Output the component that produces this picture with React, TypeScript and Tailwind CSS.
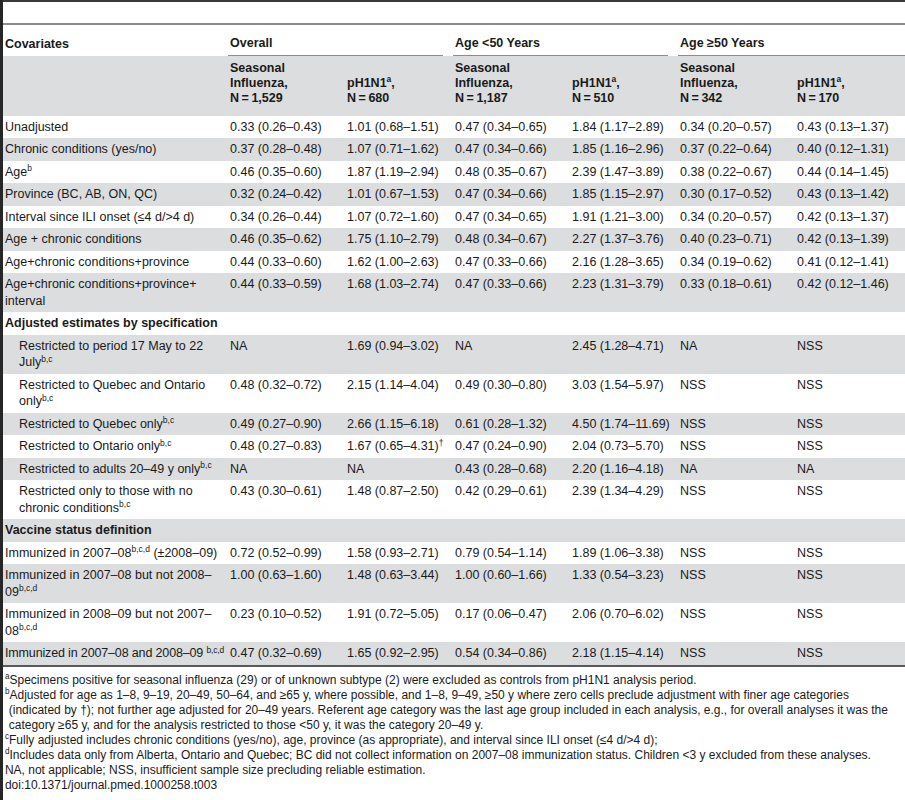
import type { ReactNode } from "react";

type Row = {
  label: ReactNode;
  values?: ReactNode[];
  indent?: boolean;
  section?: boolean;
};

const Sup = ({ children }: { children: ReactNode }) => (
  <sup className="text-[8.5px]">{children}</sup>
);

const rows: Row[] = [
  {
    label: "Unadjusted",
    values: ["0.33 (0.26–0.43)", "1.01 (0.68–1.51)", "0.47 (0.34–0.65)", "1.84 (1.17–2.89)", "0.34 (0.20–0.57)", "0.43 (0.13–1.37)"],
  },
  {
    label: "Chronic conditions (yes/no)",
    values: ["0.37 (0.28–0.48)", "1.07 (0.71–1.62)", "0.47 (0.34–0.66)", "1.85 (1.16–2.96)", "0.37 (0.22–0.64)", "0.40 (0.12–1.31)"],
  },
  {
    label: (
      <>
        Age<Sup>b</Sup>
      </>
    ),
    values: ["0.46 (0.35–0.60)", "1.87 (1.19–2.94)", "0.48 (0.35–0.67)", "2.39 (1.47–3.89)", "0.38 (0.22–0.67)", "0.44 (0.14–1.45)"],
  },
  {
    label: "Province (BC, AB, ON, QC)",
    values: ["0.32 (0.24–0.42)", "1.01 (0.67–1.53)", "0.47 (0.34–0.66)", "1.85 (1.15–2.97)", "0.30 (0.17–0.52)", "0.43 (0.13–1.42)"],
  },
  {
    label: "Interval since ILI onset (≤4 d/>4 d)",
    values: ["0.34 (0.26–0.44)", "1.07 (0.72–1.60)", "0.47 (0.34–0.65)", "1.91 (1.21–3.00)", "0.34 (0.20–0.57)", "0.42 (0.13–1.37)"],
  },
  {
    label: "Age + chronic conditions",
    values: ["0.46 (0.35–0.62)", "1.75 (1.10–2.79)", "0.48 (0.34–0.67)", "2.27 (1.37–3.76)", "0.40 (0.23–0.71)", "0.42 (0.13–1.39)"],
  },
  {
    label: "Age+chronic conditions+province",
    values: ["0.44 (0.33–0.60)", "1.62 (1.00–2.63)", "0.47 (0.33–0.66)", "2.16 (1.28–3.65)", "0.34 (0.19–0.62)", "0.41 (0.12–1.41)"],
  },
  {
    label: (
      <>
        Age+chronic conditions+province+
        <br />
        interval
      </>
    ),
    values: ["0.44 (0.33–0.59)", "1.68 (1.03–2.74)", "0.47 (0.33–0.66)", "2.23 (1.31–3.79)", "0.33 (0.18–0.61)", "0.42 (0.12–1.46)"],
  },
  { label: "Adjusted estimates by specification", section: true },
  {
    indent: true,
    label: (
      <>
        Restricted to period 17 May to 22
        <br />
        July<Sup>b,c</Sup>
      </>
    ),
    values: ["NA", "1.69 (0.94–3.02)", "NA", "2.45 (1.28–4.71)", "NA", "NSS"],
  },
  {
    indent: true,
    label: (
      <>
        Restricted to Quebec and Ontario
        <br />
        only<Sup>b,c</Sup>
      </>
    ),
    values: ["0.48 (0.32–0.72)", "2.15 (1.14–4.04)", "0.49 (0.30–0.80)", "3.03 (1.54–5.97)", "NSS", "NSS"],
  },
  {
    indent: true,
    label: (
      <>
        Restricted to Quebec only<Sup>b,c</Sup>
      </>
    ),
    values: ["0.49 (0.27–0.90)", "2.66 (1.15–6.18)", "0.61 (0.28–1.32)", "4.50 (1.74–11.69)", "NSS", "NSS"],
  },
  {
    indent: true,
    label: (
      <>
        Restricted to Ontario only<Sup>b,c</Sup>
      </>
    ),
    values: [
      "0.48 (0.27–0.83)",
      <>
        1.67 (0.65–4.31)<Sup>†</Sup>
      </>,
      "0.47 (0.24–0.90)",
      "2.04 (0.73–5.70)",
      "NSS",
      "NSS",
    ],
  },
  {
    indent: true,
    label: (
      <>
        Restricted to adults 20–49 y only<Sup>b,c</Sup>
      </>
    ),
    values: ["NA", "NA", "0.43 (0.28–0.68)", "2.20 (1.16–4.18)", "NA", "NA"],
  },
  {
    indent: true,
    label: (
      <>
        Restricted only to those with no
        <br />
        chronic conditions<Sup>b,c</Sup>
      </>
    ),
    values: ["0.43 (0.30–0.61)", "1.48 (0.87–2.50)", "0.42 (0.29–0.61)", "2.39 (1.34–4.29)", "NSS", "NSS"],
  },
  { label: "Vaccine status definition", section: true },
  {
    label: (
      <>
        Immunized in 2007–08<Sup>b,c,d</Sup> (±2008–09)
      </>
    ),
    values: ["0.72 (0.52–0.99)", "1.58 (0.93–2.71)", "0.79 (0.54–1.14)", "1.89 (1.06–3.38)", "NSS", "NSS"],
  },
  {
    label: (
      <>
        Immunized in 2007–08 but not 2008–
        <br />
        09<Sup>b,c,d</Sup>
      </>
    ),
    values: ["1.00 (0.63–1.60)", "1.48 (0.63–3.44)", "1.00 (0.60–1.66)", "1.33 (0.54–3.23)", "NSS", "NSS"],
  },
  {
    label: (
      <>
        Immunized in 2008–09 but not 2007–
        <br />
        08<Sup>b,c,d</Sup>
      </>
    ),
    values: ["0.23 (0.10–0.52)", "1.91 (0.72–5.05)", "0.17 (0.06–0.47)", "2.06 (0.70–6.02)", "NSS", "NSS"],
  },
  {
    label: (
      <span className="tracking-[-0.15px]">
        Immunized in 2007–08 and 2008–09 <Sup>b,c,d</Sup>
      </span>
    ),
    values: ["0.47 (0.32–0.69)", "1.65 (0.92–2.95)", "0.54 (0.34–0.86)", "2.18 (1.15–4.14)", "NSS", "NSS"],
  },
];

const subHeads = [
  { n: "1,529", seasonal: true },
  { n: "680" },
  { n: "1,187", seasonal: true },
  { n: "510" },
  { n: "342", seasonal: true },
  { n: "170" },
];

function GroupHead({ title, last }: { title: ReactNode; last?: boolean }) {
  return (
    <th colSpan={2} className="p-0 text-left align-bottom font-bold">
      <div
        className={`border-b border-[#8c8c8c] pb-[3px] pl-[2px] pt-[10px] ${last ? "" : "mr-[10px]"}`}
      >
        {title}
      </div>
    </th>
  );
}

export default function App() {
  return (
    <div className="min-h-[800px] overflow-hidden border-l-[3px] border-[#262626] bg-white font-['Liberation_Sans',Arial,sans-serif] text-[#1a1a1a]">
      <div className="h-[23px] border-t-2 border-[#3a3a3a]" />

      <div className="border-b-2 border-t-2 border-b-[#5a5a5a] border-t-[#8c8c8c] text-[12.5px] leading-[16.5px]">
        <table className="w-full table-fixed border-collapse">
          <colgroup>
            <col className="w-[225px]" />
            <col className="w-[117px]" />
            <col className="w-[108px]" />
            <col className="w-[117px]" />
            <col className="w-[108px]" />
            <col className="w-[117px]" />
            <col className="w-[110px]" />
          </colgroup>
          <thead>
            <tr>
              <th className="pb-[3px] pl-[2px] pt-[10px] text-left align-bottom font-bold">
                Covariates
              </th>
              <GroupHead title="Overall" />
              <GroupHead title="Age <50 Years" />
              <GroupHead title="Age ≥50 Years" last />
            </tr>
            <tr className="bg-[#dcdddf] leading-[15px]">
              <th />
              {subHeads.map((h, i) => (
                <th
                  key={i}
                  className="pb-[10px] pl-[2px] pt-[5px] text-left align-bottom font-bold"
                >
                  {h.seasonal ? (
                    <>
                      Seasonal
                      <br />
                      Influenza,
                    </>
                  ) : (
                    <>
                      pH1N1<Sup>a</Sup>,
                    </>
                  )}
                  <br />N{"\u2009"}={"\u2009"}
                  {h.n}
                </th>
              ))}
            </tr>
          </thead>
          <tbody>
            {rows.map((row, i) => (
              <tr key={i} className={i % 2 === 1 ? "bg-[#dcdddf]" : "bg-white"}>
                {row.section ? (
                  <td colSpan={7} className="py-[3px] pl-[2px] font-bold whitespace-nowrap">
                    {row.label}
                  </td>
                ) : (
                  <>
                    <td
                      className={`py-[3px] align-top whitespace-nowrap ${row.indent ? "pl-[16px]" : "pl-[2px]"}`}
                    >
                      {row.label}
                    </td>
                    {row.values?.map((v, j) => (
                      <td key={j} className="py-[3px] pl-[2px] align-top whitespace-nowrap">
                        {v}
                      </td>
                    ))}
                  </>
                )}
              </tr>
            ))}
          </tbody>
        </table>
      </div>

      {/* footnotes are set a touch narrower than the table text */}
      <div className="w-[940px] origin-top-left scale-x-[0.96] pl-[2px] pt-[6px] text-[12.5px] leading-[15px] whitespace-nowrap">
        <p>
          <Sup>a</Sup>Specimens positive for seasonal influenza (29) or of unknown subtype (2) were
          excluded as controls from pH1N1 analysis period.
        </p>
        <p>
          <Sup>b</Sup>Adjusted for age as 1–8, 9–19, 20–49, 50–64, and ≥65 y, where possible, and
          1–8, 9–49, ≥50 y where zero cells preclude adjustment with finer age categories
        </p>
        <p className="pl-[4px]">
          (indicated by †); not further age adjusted for 20–49 years. Referent age category was the
          last age group included in each analysis, e.g., for overall analyses it was the
        </p>
        <p className="pl-[4px]">
          category ≥65 y, and for the analysis restricted to those &lt;50 y, it was the category
          20–49 y.
        </p>
        <p>
          <Sup>c</Sup>Fully adjusted includes chronic conditions (yes/no), age, province (as
          appropriate), and interval since ILI onset (≤4 d/&gt;4 d);
        </p>
        <p>
          <Sup>d</Sup>Includes data only from Alberta, Ontario and Quebec; BC did not collect
          information on 2007–08 immunization status. Children &lt;3 y excluded from these analyses.
        </p>
        <p>NA, not applicable; NSS, insufficient sample size precluding reliable estimation.</p>
        <p>doi:10.1371/journal.pmed.1000258.t003</p>
      </div>
    </div>
  );
}
